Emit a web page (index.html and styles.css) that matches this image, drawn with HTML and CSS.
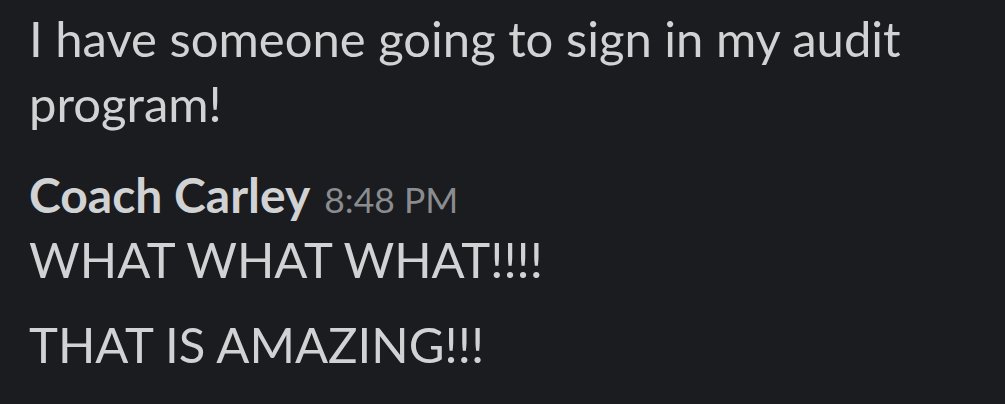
FILE: index.html
```html
<!DOCTYPE html>
<html>
<head>
<meta charset="utf-8">
<link rel="stylesheet" href="styles.css">
</head>
<body>
<div class="chat">
  <p class="msg first">I have someone going to sign in my audit program!</p>
  <div class="group">
    <div class="header"><span class="name">Coach Carley</span><span class="time">8:48 PM</span></div>
    <p class="msg">WHAT WHAT WHAT!!!!</p>
    <p class="msg second">THAT IS AMAZING!!!</p>
  </div>
</div>
</body>
</html>
```
FILE: styles.css
```css
html, body {
  margin: 0;
  padding: 0;
  background: #1b1c20;
  height: 100%;
  overflow: hidden;
}
.chat {
  font-family: Lato, "Liberation Sans", sans-serif;
  color: #d1d2d3;
  padding: 6px 30px 0 29px;
  width: 890px;
}
.msg {
  margin: 0;
  font-size: 49px;
  line-height: 65px;
}
.group {
  margin-top: 26px;
}
.header {
  line-height: 65px;
  font-size: 48px;
}
.name {
  font-weight: 700;
}
.time {
  font-size: 35.5px;
  line-height: 1;
  color: #8b8c8f;
  margin-left: 14px;
}
.msg.second {
  margin-top: 20px;
}
```
